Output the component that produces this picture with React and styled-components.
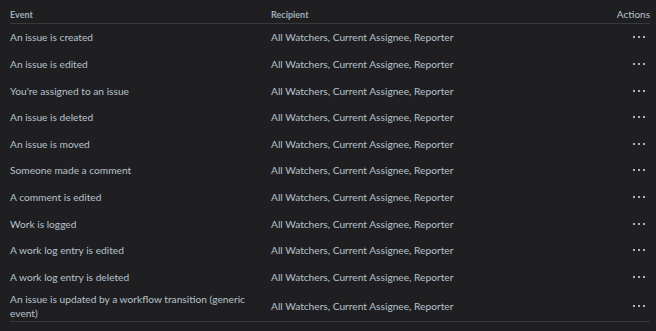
import React from "react";
import styled, { createGlobalStyle } from "styled-components";

const Global = createGlobalStyle`
  html, body { margin: 0; padding: 0; background: #1f1f21; }
  body { font-family: Lato, "Noto Sans", sans-serif; }
`;

const Page = styled.div`
  width: 656px;
  height: 331px;
  background: #1f1f21;
  padding: 0 6px 0 10px;
  box-sizing: border-box;
`;

const Table = styled.div`
  display: grid;
  grid-template-columns: 261px 1fr 60px;
`;

const HeadCell = styled.div`
  height: 24px;
  box-sizing: border-box;
  padding-top: 5px;
  display: flex;
  align-items: center;
  justify-content: ${(p) => (p.$right ? "flex-end" : "flex-start")};
  border-bottom: 1px solid #38393d;
`;

const HeadLabel = styled.span`
  font-size: ${(p) => (p.$big ? "10px" : "9px")};
  font-weight: ${(p) => (p.$big ? 400 : 700)};
  color: ${(p) => (p.$big ? "#b6c2cf" : "#9fadbc")};
`;

const Cell = styled.div`
  min-height: 26.62px;
  box-sizing: border-box;
  padding: 2px ${(p) => (p.$pad ? "14px" : "0")} ${(p) => (p.$last ? "1.3px" : "2px")} 0;
  display: flex;
  align-items: center;
  justify-content: ${(p) => (p.$right ? "flex-end" : "flex-start")};
  font-size: 10.2px;
  line-height: 14px;
  color: #b6c2cf;
  border-bottom: ${(p) => (p.$last ? "1px solid #38393d" : "none")};
`;

const Dots = styled.div`
  display: flex;
  gap: 3px;
  margin-right: 5px;
  span {
    width: 2px;
    height: 2px;
    background: #a9b4c0;
    display: block;
  }
`;

const events = [
  "An issue is created",
  "An issue is edited",
  "You're assigned to an issue",
  "An issue is deleted",
  "An issue is moved",
  "Someone made a comment",
  "A comment is edited",
  "Work is logged",
  "A work log entry is edited",
  "A work log entry is deleted",
  "An issue is updated by a workflow transition (generic event)",
];

export default function App() {
  return (
    <>
      <Global />
      <Page>
        <Table>
          <HeadCell><HeadLabel>Event</HeadLabel></HeadCell>
          <HeadCell><HeadLabel>Recipient</HeadLabel></HeadCell>
          <HeadCell $right><HeadLabel $big>Actions</HeadLabel></HeadCell>
          {events.map((e, i) => {
            const last = i === events.length - 1;
            return (
              <React.Fragment key={e}>
                <Cell $pad $last={last}>{e}</Cell>
                <Cell $last={last}>All Watchers, Current Assignee, Reporter</Cell>
                <Cell $right $last={last}>
                  <Dots><span /><span /><span /></Dots>
                </Cell>
              </React.Fragment>
            );
          })}
        </Table>
      </Page>
    </>
  );
}
